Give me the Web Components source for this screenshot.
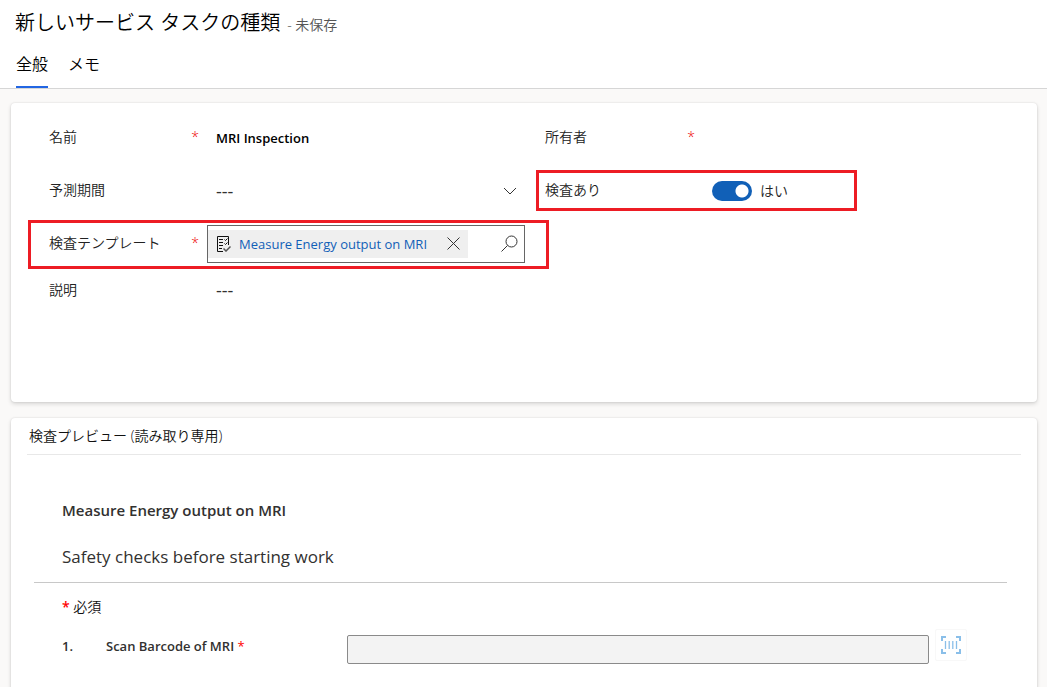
<!DOCTYPE html>
<html lang="ja">
<head>
<meta charset="utf-8">
<meta name="viewport" content="width=device-width, initial-scale=1">
<title>新しいサービス タスクの種類</title>
<style>
html {
    scrollbar-width: none;
}

body {
    --text: #323130;
    --label: #222;
    --blue: #1160b7;
    --red: #ed1c24;
    margin: 0;
    background: #faf9f8;
    color: var(--text);
    font: 14px/20px "Open Sans", "Noto Sans CJK JP", sans-serif;
}

main {
    display: flex;
    flex-direction: column;
    gap: 16px;
    padding: 14px 10px 14px 11px;
}
</style>
</head>
<body>
<record-header name="新しいサービス タスクの種類" status="- 未保存">
    <tab-link active>全般</tab-link>
    <tab-link>メモ</tab-link>
</record-header>

<main>
    <form-card>
        <field-grid>
            <text-field label="名前" value="MRI Inspection" required></text-field>
            <text-field label="所有者" required></text-field>
            <select-field label="予測期間" value="---"></select-field>
            <toggle-field label="検査あり" value="はい" highlight></toggle-field>
            <lookup-field label="検査テンプレート" value="Measure Energy output on MRI" required highlight></lookup-field>
            <span></span>
            <note-field label="説明" value="---"></note-field>
        </field-grid>
    </form-card>

    <form-card heading="検査プレビュー (読み取り専用)">
        <inspection-preview name="Measure Energy output on MRI" description="Safety checks before starting work">
            <inspection-question number="1." label="Scan Barcode of MRI"></inspection-question>
        </inspection-preview>
    </form-card>
</main>

<script>
class BaseElement extends HTMLElement {
    connectedCallback() {
        if (this.shadowRoot) {
            return
        }

        this.attachShadow({mode: 'open'})
        this.shadowRoot.innerHTML = this.template()
    }

    attr(name) {
        return this.getAttribute(name) || ''
    }
}

class RecordHeader extends BaseElement {
    template() {
        return `
<style>
:host {
    display: block;
    padding: 9px 15px 0;
    background: #fff;
    border-bottom: 1px solid #d6d6d6;
}

.title {
    display: flex;
    align-items: baseline;
    gap: 7px;
}

h1 {
    margin: 0;
    font-size: 20px;
    line-height: 28px;
    font-weight: 350;
    color: #000;
}

.status {
    font-weight: 350;
    color: #555;
}

nav {
    display: flex;
    gap: 20px;
    padding: 15px 1px 0;
}
</style>

<div class="title">
    <h1>${this.attr('name')}</h1>
    <span class="status">${this.attr('status')}</span>
</div>
<nav><slot></slot></nav>`
    }
}

class TabLink extends BaseElement {
    template() {
        const active = this.hasAttribute('active')

        return `
<style>
:host {
    display: block;
}

a {
    display: block;
    height: 34px;
    border-bottom: 2px solid ${active ? '#2266e3' : 'transparent'};
    font-size: 16px;
    line-height: 24px;
    font-weight: 350;
    color: #000;
    text-decoration: none;
}
</style>

<a href="#"><slot></slot></a>`
    }
}

class FormCard extends BaseElement {
    template() {
        const heading = this.attr('heading')

        return `
<style>
:host {
    display: block;
    background: #fff;
    border-radius: 4px;
    box-shadow: 0 2px 4px rgba(0, 0, 0, .14), 0 0 2px rgba(0, 0, 0, .12);
}

h2 {
    margin: 0 16px;
    padding: 8px 2px;
    border-bottom: 1px solid #e8e8e8;
    font-size: 14px;
    line-height: 20px;
    font-weight: 350;
    color: #111;
}
</style>

${heading ? `<h2>${heading}</h2>` : ''}
<slot></slot>`
    }
}

class FieldGrid extends BaseElement {
    template() {
        return `
<style>
:host {
    display: grid;
    grid-template-columns: 1fr 1fr;
    column-gap: 20px;
    padding: 8px 16px 0 38px;
}
</style>

<slot></slot>`
    }
}

// shared label + control row, subclasses supply control()
class BaseField extends BaseElement {
    template() {
        return `
<style>
:host {
    display: grid;
    grid-template-columns: 150px minmax(0, 1fr);
    column-gap: 9px;
    align-items: center;
    min-height: 53px;
    position: relative;
}

:host([highlight])::after {
    content: "";
    position: absolute;
    inset: 6px 164px 6px -9px;
    border: 3px solid var(--red);
    pointer-events: none;
}

label {
    display: flex;
    justify-content: space-between;
    padding-bottom: 2px;
    font-weight: 350;
    color: var(--label);
}

.star {
    color: #e00;
}

.control {
    display: flex;
    align-items: center;
    min-width: 0;
    padding: 0 8px;
}

input, select, textarea, button {
    margin: 0;
    padding: 0;
    border: 0;
    background: none;
    font: inherit;
    color: inherit;
}

svg {
    display: block;
    fill: none;
    stroke: #333;
}

${this.styles()}
</style>

<label for="control">
    <span>${this.attr('label')}</span>
    ${this.hasAttribute('required') ? '<span class="star">*</span>' : ''}
</label>
<div class="control">${this.control()}</div>`
    }

    styles() {
        return ''
    }
}

class TextField extends BaseField {
    styles() {
        return `
input {
    width: 100%;
    font-size: 13px;
    font-weight: 600;
    color: #000;
}`
    }

    control() {
        return `<input id="control" type="text" value="${this.attr('value')}">`
    }
}

class SelectField extends BaseField {
    styles() {
        return `
select {
    flex: 1;
    appearance: none;
    font-size: 18px;
}`
    }

    control() {
        return `
<select id="control"><option>${this.attr('value')}</option></select>
<svg width="14" height="8" viewBox="0 0 14 8"><path d="M1 1l6 6 6-6"/></svg>`
    }
}

class ToggleField extends BaseField {
    styles() {
        return `
.control {
    gap: 8px;
    font-weight: 350;
    color: var(--label);
}

input {
    appearance: none;
    width: 40px;
    height: 20px;
    border-radius: 10px;
    background: radial-gradient(circle at 30px 10px, #fff 6px, transparent 7px) var(--blue);
}`
    }

    control() {
        return `
<input id="control" type="checkbox" role="switch" checked>
<span>${this.attr('value')}</span>`
    }
}

class LookupField extends BaseField {
    styles() {
        return `
:host([highlight])::after {
    inset: 3px -24px 1px -21px;
}

.control {
    height: 36px;
    justify-content: space-between;
    margin-left: -1px;
    padding: 0 6px 0 0;
    border: 1px solid #666;
}

.chip {
    display: flex;
    align-items: center;
    gap: 8px;
    height: 28px;
    padding: 0 8px;
    background: #efefef;
    white-space: nowrap;
}

a {
    font-size: 13px;
    color: var(--blue);
    text-decoration: none;
}

.remove {
    padding: 0 0 0 12px;
}`
    }

    control() {
        return `
<div class="chip">
    <svg width="15" height="16" viewBox="0 0 15 16">
        <path stroke="#111" d="M7 15.500H1.500V.5h11V9M3 3.500h4M3 6.500h4M3 9.500h4M3 12.500h3M8.500 3.500l1 1 2-2M8.500 7.500l1 1 2-2"/>
        <path stroke="#555" stroke-width="1.500" d="M7.500 12.500l2.500 2.500 4.500-4.500"/>
    </svg>
    <a href="#">${this.attr('value')}</a>
    <button class="remove" type="button" aria-label="削除">
        <svg width="13" height="13" viewBox="0 0 13 13"><path d="M.5.5l12 12M12.500.5l-12 12"/></svg>
    </button>
</div>
<button id="control" type="button" aria-label="検索">
    <svg width="17" height="17" viewBox="0 0 17 17"><circle cx="10.500" cy="6.500" r="5.500"/><path d="M6.500 10.500L.5 16.500"/></svg>
</button>`
    }
}

class NoteField extends BaseField {
    styles() {
        return `
:host {
    align-items: start;
    padding-top: 10px;
}

textarea {
    width: 100%;
    height: 122px;
    resize: none;
    font-size: 18px;
}`
    }

    control() {
        return `<textarea id="control">${this.attr('value')}</textarea>`
    }
}

class InspectionPreview extends BaseElement {
    template() {
        return `
<style>
:host {
    display: block;
    padding: 45px 30px 40px 23px;
}

header {
    padding: 0 28px 12px;
    border-bottom: 1px solid #c8c8c8;
}

h3 {
    margin: 0 0 24px;
    font-size: 15px;
    line-height: 20px;
    font-weight: 600;
}

p {
    margin: 0;
}

header p {
    font-size: 17px;
    line-height: 26px;
}

.required {
    padding: 14px 28px 12px;
    font-weight: 350;
    color: #111;
}

.star {
    font-weight: 600;
    color: #f00;
}
</style>

<header>
    <h3>${this.attr('name')}</h3>
    <p>${this.attr('description')}</p>
</header>
<p class="required"><span class="star">*</span> 必須</p>
<slot></slot>`
    }
}

class InspectionQuestion extends BaseElement {
    template() {
        return `
<style>
:host {
    display: grid;
    grid-template-columns: 44px 241px 1fr 32px;
    align-items: start;
    padding: 0 40px 0 28px;
}

.number, label {
    padding-top: 7px;
    font-size: 13px;
    line-height: 20px;
    font-weight: 600;
}

.star {
    font-weight: 400;
    color: #f00;
}

input {
    box-sizing: border-box;
    height: 29px;
    margin: 6px 6px 0 0;
    padding: 0 8px;
    border: 1px solid #8a8a8a;
    border-radius: 2px;
    background: #f3f3f3;
    font: inherit;
}

button {
    display: grid;
    place-items: center;
    width: 32px;
    height: 32px;
    padding: 0;
    border: 1px solid #f8f8f8;
    border-radius: 2px;
    background: #fff;
}

svg {
    fill: none;
    stroke: #8abfe9;
    stroke-width: 2;
}
</style>

<span class="number">${this.attr('number')}</span>
<label for="answer">${this.attr('label')} <span class="star">*</span></label>
<input id="answer" type="text" readonly>
<button type="button" aria-label="バーコードをスキャン">
    <svg width="20" height="18" viewBox="0 0 20 18">
        <path d="M5 1H1v4M15 1h4v4M5 17H1v-4M15 17h4v-4"/>
        <path stroke-width="1.300" d="M4.500 5v8M8.200 5v8M11.800 5v8M15.500 5v8"/>
    </svg>
</button>`
    }
}

customElements.define('record-header', RecordHeader)
customElements.define('tab-link', TabLink)
customElements.define('form-card', FormCard)
customElements.define('field-grid', FieldGrid)
customElements.define('text-field', TextField)
customElements.define('select-field', SelectField)
customElements.define('toggle-field', ToggleField)
customElements.define('lookup-field', LookupField)
customElements.define('note-field', NoteField)
customElements.define('inspection-preview', InspectionPreview)
customElements.define('inspection-question', InspectionQuestion)
</script>
</body>
</html>
